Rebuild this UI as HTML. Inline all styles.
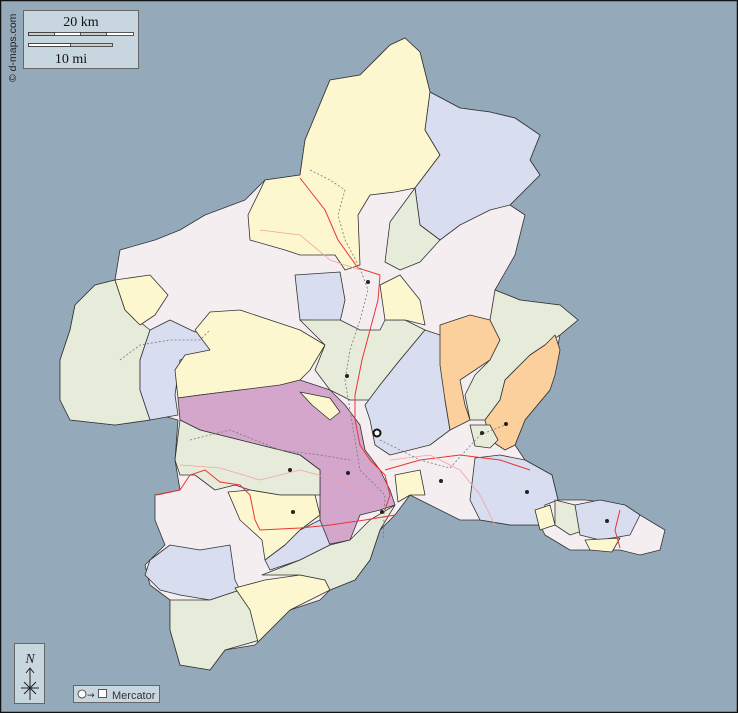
<!DOCTYPE html>
<html><head><meta charset="utf-8"><style>
html,body{margin:0;padding:0;background:#94aabb;}
svg{display:block}
</style></head><body>
<svg width="738" height="713" viewBox="0 0 738 713" xmlns="http://www.w3.org/2000/svg" font-family="Liberation Serif, serif">
<rect x="0" y="0" width="738" height="713" fill="#94aabb"/>
<rect x="0.5" y="0.5" width="737" height="712" fill="none" stroke="#111" stroke-width="1.5"/>
<g stroke="#333" stroke-width="0.8" stroke-linejoin="round">
<!-- base outline pink -->
<path fill="#f5eef0" d="M330,80 L360,75 L390,45 L405,38 L420,52 L430,92 L460,108 L490,112 L515,118 L540,135 L530,160 L540,175 L510,205 L525,215 L515,255 L495,290 L520,300 L560,305 L578,320 L560,335 L555,360 L550,390 L525,420 L515,445 L525,460 L552,475 L558,500 L585,500 L625,505 L640,515 L665,530 L660,550 L640,555 L620,550 L590,550 L570,550 L545,535 L540,525 L510,525 L480,520 L460,520 L430,505 L410,495 L395,515 L380,530 L370,560 L355,580 L330,590 L320,600 L290,610 L270,630 L255,645 L225,650 L210,670 L180,665 L170,630 L170,600 L150,585 L145,565 L165,545 L155,520 L155,495 L180,490 L175,460 L178,420 L160,415 L150,420 L115,425 L70,420 L60,400 L60,360 L70,330 L75,305 L95,285 L115,280 L120,250 L155,240 L180,230 L205,215 L245,200 L265,180 L300,175 L305,140 Z"/>
<path fill="#fdf7cf" d="M330,80 L360,75 L390,45 L405,38 L420,52 L430,92 L425,130 L440,155 L415,188 L395,192 L370,195 L358,215 L360,265 L345,270 L335,255 L300,255 L285,250 L250,240 L248,215 L265,180 L300,175 L305,140 Z"/>
<path fill="#d8ddef" d="M430,92 L460,108 L490,112 L515,118 L540,135 L530,160 L540,175 L510,205 L490,210 L460,225 L440,240 L420,225 L415,188 L440,155 L425,130 Z"/>
<path fill="#e6ecd9" d="M415,188 L420,225 L440,240 L420,262 L400,270 L385,262 L390,222 Z"/>
<path fill="#e6ecd9" d="M75,305 L95,285 L115,280 L125,310 L150,330 L140,360 L140,390 L150,420 L115,425 L70,420 L60,400 L60,360 L70,330 Z"/>
<path fill="#fdf7cf" d="M115,280 L150,275 L168,295 L155,315 L140,325 L125,310 Z"/>
<path fill="#d8ddef" d="M150,330 L170,320 L195,332 L215,330 L210,350 L180,360 L175,395 L178,415 L150,420 L140,390 L140,360 Z"/>
<path fill="#fdf7cf" d="M195,330 L210,312 L240,310 L270,320 L300,330 L325,345 L310,370 L295,385 L240,390 L200,395 L178,398 L175,370 L185,355 L210,350 Z"/>
<path fill="#d8ddef" d="M295,275 L340,272 L345,300 L340,322 L300,320 Z"/>
<path fill="#e6ecd9" d="M300,320 L340,320 L360,330 L380,330 L385,320 L405,320 L425,330 L400,360 L380,385 L370,400 L350,400 L330,390 L315,370 L325,345 Z"/>
<path fill="#fdf7cf" d="M380,285 L400,275 L420,300 L425,325 L405,320 L385,320 Z"/>
<path fill="#d8ddef" d="M425,330 L440,335 L445,360 L445,400 L450,430 L430,445 L410,450 L390,455 L375,445 L370,420 L365,405 L380,385 L400,360 Z"/>
<path fill="#d4a6cc" d="M178,398 L200,395 L240,390 L280,385 L300,380 L330,390 L345,405 L360,425 L365,450 L380,470 L390,490 L395,505 L380,510 L360,515 L350,540 L325,545 L320,530 L320,470 L300,455 L240,440 L200,430 L180,420 Z"/>
<path fill="#fdf7cf" d="M300,392 L330,398 L340,412 L330,420 L312,405 Z"/>
<path fill="#e6ecd9" d="M180,420 L200,430 L240,440 L300,455 L320,470 L320,495 L280,495 L250,490 L235,485 L215,490 L195,475 L180,475 L175,460 Z"/>
<path fill="#fdf7cf" d="M228,492 L250,490 L280,495 L315,495 L320,515 L300,530 L285,545 L265,560 L262,540 L240,520 Z"/>
<path fill="#d8ddef" d="M320,520 L330,545 L300,560 L270,570 L265,560 L285,545 L300,530 Z"/>
<path fill="#d8ddef" d="M150,560 L170,545 L200,550 L230,545 L235,580 L240,590 L210,600 L180,595 L160,590 L145,575 Z"/>
<path fill="#e6ecd9" d="M170,600 L210,600 L240,590 L255,620 L260,640 L225,650 L210,670 L180,665 L170,630 Z"/>
<path fill="#fdf7cf" d="M235,588 L265,580 L300,575 L325,580 L330,590 L290,610 L270,630 L258,642 L250,610 Z"/>
<path fill="#e6ecd9" d="M262,575 L300,560 L330,545 L350,540 L370,520 L395,505 L380,530 L370,560 L355,580 L330,590 L325,580 L300,575 Z"/>
<path fill="#fdf7cf" d="M395,475 L420,470 L425,495 L410,495 L398,502 Z"/>
<path fill="#fcd09c" d="M440,325 L470,315 L490,320 L500,340 L490,360 L475,370 L460,380 L465,405 L470,420 L450,430 L445,400 L440,365 Z"/>
<path fill="#e6ecd9" d="M495,290 L520,300 L560,305 L578,320 L560,335 L545,345 L530,355 L505,380 L500,400 L485,420 L470,420 L465,395 L475,375 L490,360 L500,340 L490,320 Z"/>
<path fill="#fcd09c" d="M555,335 L560,350 L555,375 L550,390 L525,420 L515,445 L505,450 L490,440 L485,420 L500,400 L505,380 L520,365 L530,355 L545,345 Z"/>
<path fill="#e6ecd9" d="M470,425 L490,425 L498,440 L490,448 L475,446 Z"/>
<path fill="#d8ddef" d="M475,458 L500,455 L525,460 L552,475 L558,500 L545,505 L540,525 L510,525 L480,520 L470,500 Z"/>
<path fill="#fdf7cf" d="M535,510 L550,505 L555,525 L540,530 Z"/>
<path fill="#e6ecd9" d="M555,500 L575,505 L585,530 L570,535 L555,525 Z"/>
<path fill="#d8ddef" d="M575,505 L600,500 L625,505 L640,515 L630,535 L600,540 L580,535 Z"/>
<path fill="#fdf7cf" d="M585,540 L620,538 L612,552 L590,550 Z"/>
</g>
<g fill="none" stroke="#e33" stroke-width="1">
<path d="M300,178 L325,210 L338,240 L358,268 L380,275 L378,300 L370,330 L362,360 L355,395 L355,420 L360,445 L370,460 L385,475 L390,495 L385,510"/>
<path d="M385,470 L420,460 L460,455 L500,460 L530,470"/>
<path d="M157,495 L180,490 L190,475 L205,470 L220,482 L240,485 L250,495 L255,520 L260,530 L300,528 L330,525 L365,520 L395,515"/>
<path d="M620,510 L615,530 L620,548"/>
</g>
<g fill="none" stroke="#f3a0a8" stroke-width="0.8">
<path d="M260,230 L300,235 L330,260 L360,270"/>
<path d="M390,460 L430,455 L460,470 L480,495 L495,525"/>
<path d="M180,465 L220,468 L260,480 L300,470 L330,478 L370,495"/>
</g>
<g fill="none" stroke="#777" stroke-width="0.8" stroke-dasharray="2,2">
<path d="M310,170 L330,180 L345,190 L338,215 L345,240 L360,268 L368,290 L360,320 L350,350 L345,380 L350,410 L355,440 L360,470 L385,495 L383,540"/>
<path d="M120,360 L140,345 L170,340 L200,340 L210,330"/>
<path d="M190,440 L230,430 L280,450 L320,455 L350,460"/>
<path d="M380,440 L420,460 L450,468 L480,435 L505,425"/>
</g>
<g fill="#222">
<circle cx="368" cy="282" r="2"/><circle cx="347" cy="376" r="2"/><circle cx="290" cy="470" r="2"/>
<circle cx="348" cy="473" r="2"/><circle cx="293" cy="512" r="2"/><circle cx="382" cy="512" r="2"/>
<circle cx="441" cy="481" r="2"/><circle cx="527" cy="492" r="2"/><circle cx="482" cy="433" r="2"/>
<circle cx="506" cy="424" r="2"/><circle cx="607" cy="521" r="2"/>
</g>
<circle cx="377" cy="433" r="3.5" fill="#fff" stroke="#111" stroke-width="2"/>
<!-- scale box -->
<rect x="23.5" y="10.5" width="115" height="58" fill="#c8d6e0" stroke="#666"/>
<text x="81" y="26" font-size="14" text-anchor="middle" fill="#111">20 km</text>
<rect x="28.5" y="32.5" width="105" height="3" fill="#fff" stroke="#333" stroke-width="0.8"/>
<rect x="28.5" y="32.5" width="26" height="3" fill="#ccc" stroke="#333" stroke-width="0.8"/>
<rect x="80.5" y="32.5" width="26" height="3" fill="#ccc" stroke="#333" stroke-width="0.8"/>
<rect x="28.5" y="43.5" width="84" height="3" fill="#ccc" stroke="#333" stroke-width="0.8"/>
<rect x="28.5" y="43.5" width="42" height="3" fill="#fff" stroke="#333" stroke-width="0.8"/>
<text x="71" y="63" font-size="14" text-anchor="middle" fill="#111">10 mi</text>
<text transform="translate(16,82) rotate(-90)" font-family="Liberation Sans, sans-serif" font-size="10.5" fill="#222">© d-maps.com</text>
<!-- north -->
<rect x="14.5" y="643.5" width="30" height="60" fill="#c8d6e0" stroke="#666"/>
<text x="30" y="663" font-size="14" font-style="italic" text-anchor="middle" fill="#222">N</text>
<g stroke="#222" stroke-width="1" fill="none"><path d="M30,669 V700 M26,673 L30,668 L34,673 M21,688 H39 M24,682 L36,694 M36,682 L24,694"/></g>
<!-- mercator -->
<rect x="73.5" y="685.5" width="86" height="17" fill="#c8d6e0" stroke="#666"/>
<circle cx="82" cy="694" r="4" fill="#fff" stroke="#333" stroke-width="0.8"/>
<text x="87" y="698" font-family="DejaVu Sans, sans-serif" font-size="9" fill="#222">→</text>
<rect x="98.5" y="689.5" width="8" height="8" fill="#fff" stroke="#333" stroke-width="0.8"/>
<text x="112" y="699" font-family="Liberation Sans, sans-serif" font-size="11" fill="#333">Mercator</text>
</svg>
</body></html>
